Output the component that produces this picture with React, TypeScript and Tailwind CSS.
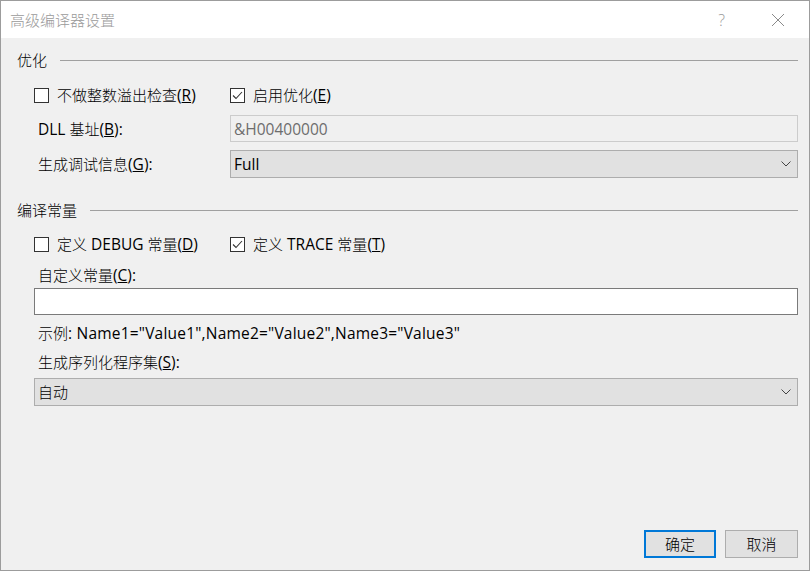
import React from "react";

const font = { fontFamily: '"Open Sans", "Noto Sans CJK SC", sans-serif' };

function L({ children }: { children: React.ReactNode }) {
  return <span className="font-normal text-[15.5px]">{children}</span>;
}

function Check({ checked }: { checked?: boolean }) {
  return (
    <span className="w-[15px] h-[15px] border border-[#333333] bg-white flex items-center justify-center shrink-0">
      {checked && (
        <svg width="11" height="11" viewBox="0 0 11 11">
          <polyline points="1,5.5 4,8.5 10,2" fill="none" stroke="#333" strokeWidth="1.1" />
        </svg>
      )}
    </span>
  );
}

function Chevron() {
  return (
    <svg width="10" height="6" viewBox="0 0 10 6" className="shrink-0">
      <polyline points="0.5,0.5 5,5 9.5,0.5" fill="none" stroke="#444" strokeWidth="1" />
    </svg>
  );
}

function Header({ text }: { text: string }) {
  return (
    <div className="h-[20px] flex items-center">
      <span className="leading-none">{text}</span>
      <div className="flex-1 h-px bg-[#a0a0a0] ml-[13px]" />
    </div>
  );
}

export default function App() {
  return (
    <div
      className="w-[810px] h-[571px] border border-[#9c9c9c] bg-[#f0f0f0] flex flex-col text-[15px] text-black overflow-hidden font-light leading-[20px]"
      style={font}
    >
      <div className="h-[37px] bg-white flex items-center pl-[9px] shrink-0">
        <span className="text-[#9a9a9a] text-[15px]">高级编译器设置</span>
        <div className="flex-1" />
        <span className="text-[#9a9a9a] text-[16px] mr-[46px]">?</span>
        <svg width="14" height="14" viewBox="0 0 14 14" className="mr-[24px]">
          <path d="M1 1 L13 13 M13 1 L1 13" stroke="#8a8a8a" strokeWidth="1" />
        </svg>
      </div>

      <div className="flex-1 flex flex-col pl-[16px] pr-[11px] pb-[12px]">
        <div className="mt-[12px]">
          <Header text="优化" />
        </div>

        <div className="mt-[15px] h-[20px] flex items-center pl-[17px]">
          <div className="w-[196px] flex items-center gap-[8px]">
            <Check />
            <span>不做整数溢出检查<L>(<u>R</u>)</L></span>
          </div>
          <div className="flex items-center gap-[8px]">
            <Check checked />
            <span>启用优化<L>(<u>E</u>)</L></span>
          </div>
        </div>

        <div className="mt-[10px] flex items-center">
          <span className="w-[213px] pl-[21px]"><L>DLL </L>基址<L>(<u>B</u>):</L></span>
          <div className="flex-1 h-[27px] border border-[#cccccc] bg-[#f0f0f0] flex items-center pl-[3px] text-[#6d6d6d]">
            <L>&amp;H00400000</L>
          </div>
        </div>

        <div className="mt-[8px] flex items-center">
          <span className="w-[213px] pl-[21px]">生成调试信息<L>(<u>G</u>):</L></span>
          <div className="flex-1 h-[28px] border border-[#adadad] bg-[#e1e1e1] flex items-center pl-[3px] pr-[6px]">
            <span className="flex-1"><L>Full</L></span>
            <Chevron />
          </div>
        </div>

        <div className="mt-[22px]">
          <Header text="编译常量" />
        </div>

        <div className="mt-[14px] h-[20px] flex items-center pl-[17px]">
          <div className="w-[196px] flex items-center gap-[8px]">
            <Check />
            <span>定义<L> DEBUG </L>常量<L>(<u>D</u>)</L></span>
          </div>
          <div className="flex items-center gap-[8px]">
            <Check checked />
            <span>定义<L> TRACE </L>常量<L>(<u>T</u>)</L></span>
          </div>
        </div>

        <div className="mt-[11px] h-[20px] flex items-center pl-[21px]">
          <span>自定义常量<L>(<u>C</u>):</L></span>
        </div>
        <div className="mt-[3px] ml-[17px] h-[27px] border border-[#7a7a7a] bg-white" />

        <div className="mt-[8px] h-[20px] flex items-center pl-[21px]">
          <span>示例<span className="tracking-[0.2px]"><L>: Name1="Value1",Name2="Value2",Name3="Value3"</L></span></span>
        </div>

        <div className="mt-[9px] h-[20px] flex items-center pl-[21px]">
          <span>生成序列化程序集<L>(<u>S</u>):</L></span>
        </div>

        <div className="mt-[6px] ml-[17px] h-[28px] border border-[#adadad] bg-[#e1e1e1] flex items-center pl-[3px] pr-[6px]">
          <span className="flex-1">自动</span>
          <Chevron />
        </div>

        <div className="mt-auto flex justify-end gap-[9px]">
          <button className="w-[72px] h-[28px] border-2 border-[#0078d7] bg-[#e1e1e1] text-[15px] flex items-center justify-center">
            确定
          </button>
          <button className="w-[73px] h-[28px] border border-[#adadad] bg-[#e1e1e1] text-[15px] flex items-center justify-center">
            取消
          </button>
        </div>
      </div>
    </div>
  );
}
